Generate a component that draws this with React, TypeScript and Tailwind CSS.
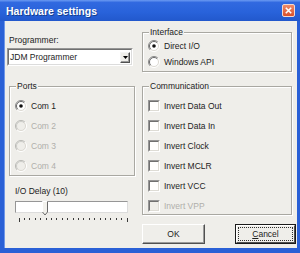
import type { ReactNode } from 'react';

function Radio({ checked = false, disabled = false }: { checked?: boolean; disabled?: boolean }) {
  return (
    <svg width="12" height="12" viewBox="0 0 12 12" className="shrink-0">
      <circle cx="6" cy="6" r="5" fill={disabled ? '#efeeea' : '#ffffff'} />
      <path d="M9.9 2.1 A5.5 5.5 0 0 0 2.1 9.9" stroke={disabled ? '#b8b8b4' : '#8a8a8a'} fill="none" />
      <path d="M9.9 2.1 A5.5 5.5 0 0 1 2.1 9.9" stroke="#ffffff" fill="none" />
      <path d="M9.2 2.8 A4.5 4.5 0 0 0 2.8 9.2" stroke={disabled ? '#cdcdc9' : '#6a6a6a'} fill="none" />
      <path d="M9.2 2.8 A4.5 4.5 0 0 1 2.8 9.2" stroke="#dcd9d2" fill="none" />
      {checked && <circle cx="6" cy="6" r="1.8" fill="#111111" />}
    </svg>
  );
}

function Check({ disabled = false }: { disabled?: boolean }) {
  return (
    <div className="h-[12px] w-[12px] shrink-0 border border-t-[#969696] border-l-[#969696] border-r-white border-b-white">
      <div
        className={`h-full w-full border border-t-[#707070] border-l-[#707070] border-r-[#dedcd5] border-b-[#dedcd5] ${
          disabled ? 'bg-[#efeeea]' : 'bg-white'
        }`}
      />
    </div>
  );
}

function Group({ label, className, children }: { label: string; className: string; children?: ReactNode }) {
  return (
    <div className={`relative border border-[#a9a8a2] shadow-[inset_1px_1px_0_#fff,1px_1px_0_#fff] ${className}`}>
      <span className="absolute -top-[6px] left-[6px] bg-[#efeeea] px-[1px] leading-[10px]">{label}</span>
      {children}
    </div>
  );
}

function RadioRow({ label, checked, disabled, h }: { label: string; checked?: boolean; disabled?: boolean; h: string }) {
  return (
    <div className={`flex items-center gap-[4px] pl-[5px] ${h}`}>
      <Radio checked={checked} disabled={disabled} />
      <span className={disabled ? 'text-[#b0afaa]' : ''}>{label}</span>
    </div>
  );
}

function CheckRow({ label, disabled }: { label: string; disabled?: boolean }) {
  return (
    <div className="flex h-[20px] items-center gap-[4px] pl-[5px]">
      <Check disabled={disabled} />
      <span className={disabled ? 'text-[#b0afaa]' : ''}>{label}</span>
    </div>
  );
}

export default function App() {
  const ticks = Array.from({ length: 21 }, (_, i) => 3.5 + i * 5.4);

  return (
    <div className="flex h-[253px] w-[300px] flex-col bg-[#2a60d6] font-['Liberation_Sans',Arial,sans-serif] text-[8.5px] leading-[10px] text-[#1c1c1c]">
      {/* Title bar */}
      <div className="flex h-[21px] shrink-0 items-center bg-[linear-gradient(to_bottom,#6b9af2_0%,#3169e0_12%,#2862da_60%,#2258cc_100%)] pl-[6px] pr-[5px]">
        <span className="pt-[2px] text-[10.5px] font-bold leading-none text-white [text-shadow:1px_1px_0_#16408f]">
          Hardware settings
        </span>
        <div className="ml-auto flex h-[13px] w-[13px] items-center justify-center rounded-[2px] border border-[#f3d8cf] bg-[linear-gradient(to_bottom,#ee8a6a,#d9502a)]">
          <svg width="7" height="7" viewBox="0 0 7 7">
            <path d="M0.8 0.8 L6.2 6.2 M6.2 0.8 L0.8 6.2" stroke="#ffffff" strokeWidth="1.6" />
          </svg>
        </div>
      </div>

      {/* Client area */}
      <div className="mb-[5px] ml-[4px] mr-[3px] flex flex-1 bg-[#efeeea] shadow-[inset_1px_0_0_#6f97e8]">
        {/* Left column */}
        <div className="ml-[3px] flex w-[128px] flex-col">
          <div className="ml-[2px] mt-[14px] h-[10px]">Programmer:</div>
          <div className="mt-[3px] flex h-[18px] w-[126px] border border-t-[#969696] border-l-[#969696] border-r-white border-b-white">
            <div className="flex flex-1 items-center border border-t-[#707070] border-l-[#707070] border-r-[#dcdcdc] border-b-[#dcdcdc] bg-white pl-[1px]">
              <span>JDM Programmer</span>
              <div className="my-[1px] ml-auto mr-[1px] flex h-[11px] w-[10px] items-center justify-center self-center border border-t-[#f4f4f4] border-l-[#f4f4f4] border-r-[#505050] border-b-[#505050] bg-[#efeeea] shadow-[inset_-1px_-1px_0_#9a9a9a]">
                <svg width="5" height="3" viewBox="0 0 5 3">
                  <path d="M0 0 H5 L2.5 3 Z" fill="#000000" />
                </svg>
              </div>
            </div>
          </div>

          <Group label="Ports" className="ml-[2px] mt-[20px] h-[90px] w-[126px] pt-[9px]">
            <RadioRow label="Com 1" checked h="h-[20px]" />
            <RadioRow label="Com 2" disabled h="h-[20px]" />
            <RadioRow label="Com 3" disabled h="h-[20px]" />
            <RadioRow label="Com 4" disabled h="h-[20px]" />
          </Group>

          <div className="ml-[8px] mt-[10px] h-[10px]">I/O Delay (10)</div>
          <div className="relative ml-[8px] mt-[5px] h-[12px] w-[113px] border border-t-[#969696] border-l-[#969696] border-r-[#dcdcdc] border-b-[#dcdcdc] bg-white">
            <svg width="6" height="15" viewBox="0 0 6 15" className="absolute -top-[1px] left-[26px]">
              <path d="M0.5 0.5 H5.5 V11 L3 14 L0.5 11 Z" fill="#f2f1ec" />
              <path d="M0.5 11 V0.5 H5.5" stroke="#ffffff" fill="none" />
              <path d="M5.5 0.5 V11 L3 14 L0.5 11" stroke="#6a6a6a" fill="none" />
            </svg>
          </div>
          <svg width="113" height="4" viewBox="0 0 113 4" className="ml-[8px] mt-[5px]">
            {ticks.map((x, i) => (
              <line
                key={i}
                x1={Math.round(x) + 0.5}
                x2={Math.round(x) + 0.5}
                y1="0"
                y2={i === 0 || i === ticks.length - 1 ? 4 : 2}
                stroke="#3a3a3a"
              />
            ))}
          </svg>
        </div>

        {/* Right column */}
        <div className="ml-[7px] flex w-[154px] flex-col">
          <Group label="Interface" className="mt-[11px] h-[40px] w-[150px] pt-[5px]">
            <RadioRow label="Direct I/O" checked h="h-[16px]" />
            <RadioRow label="Windows API" h="h-[16px]" />
          </Group>

          <Group label="Communication" className="mt-[14px] h-[129px] w-[150px] pt-[9px]">
            <CheckRow label="Invert Data Out" />
            <CheckRow label="Invert Data In" />
            <CheckRow label="Invert Clock" />
            <CheckRow label="Invert MCLR" />
            <CheckRow label="Invert VCC" />
            <CheckRow label="Invert VPP" disabled />
          </Group>

          <div className="mt-[9px] flex h-[20px]">
            <div className="flex w-[63px] items-center justify-center border border-t-white border-l-white border-r-[#505050] border-b-[#505050] shadow-[inset_-1px_-1px_0_#9a9a9a]">
              OK
            </div>
            <div className="ml-[30px] flex w-[61px] border border-[#1a1a1a]">
              <div className="flex flex-1 border border-t-white border-l-white border-r-[#505050] border-b-[#505050] p-[1px]">
                <div className="flex flex-1 items-center justify-center border border-dotted border-[#303030]">
                  <span>
                    <span className="underline">C</span>ancel
                  </span>
                </div>
              </div>
            </div>
          </div>
        </div>
      </div>
    </div>
  );
}
